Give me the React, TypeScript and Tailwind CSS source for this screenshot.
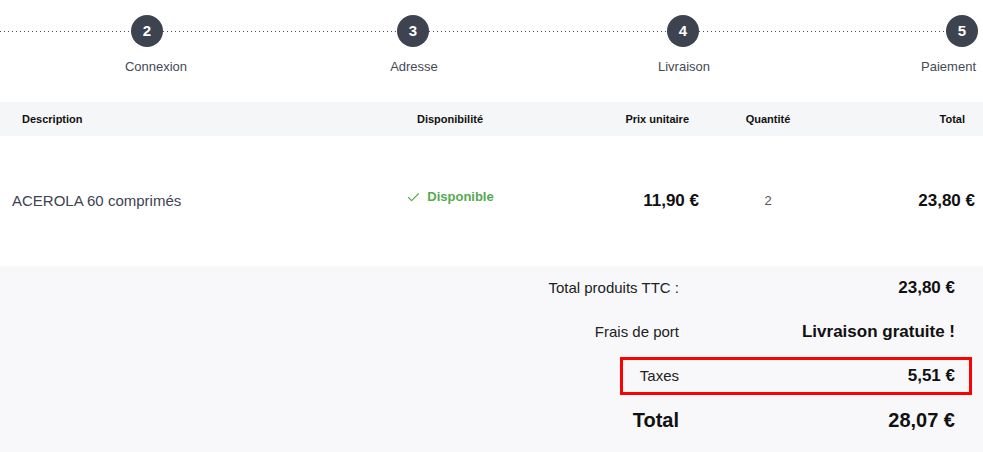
import { Check } from 'lucide-react';

const dots = 'h-px bg-[linear-gradient(to_right,#4b515c_1px,transparent_1px)] bg-[length:4px_1px] bg-repeat-x';

function Step({ n }: { n: number }) {
  return (
    <div className="w-8 h-8 rounded-full bg-[#3d434f] text-white flex items-center justify-center text-[15px] font-bold flex-shrink-0">
      {n}
    </div>
  );
}

function SummaryRow({ label, value, big, boxed }: { label: string; value: string; big?: boolean; boxed?: boolean }) {
  return (
    <div className="h-[44px] flex items-center justify-end pr-[11px]">
      <div className={`w-[352px] h-[38px] flex items-center border-[3px] ${boxed ? 'border-[#ff0000]' : 'border-transparent'}`}>
        <div className={`w-[56px] flex justify-end whitespace-nowrap ${big ? 'text-[20px] font-bold text-[#111]' : 'text-[15px] text-[#222]'}`}>
          {label}
        </div>
        <div className={`flex-1 text-right pr-[14px] font-bold text-[#111] whitespace-nowrap ${big ? 'text-[20px]' : 'text-[17px]'}`}>
          {value}
        </div>
      </div>
    </div>
  );
}

export default function App() {
  return (
    <div className="w-[983px] h-[452px] bg-white overflow-hidden font-['Liberation_Sans',Arial,sans-serif]">
      {/* Stepper */}
      <div className="pt-[15px]">
        <div className="flex items-center h-8">
          <div className={`w-[131px] ${dots}`} />
          <Step n={2} />
          <div className={`w-[234px] ${dots}`} />
          <Step n={3} />
          <div className={`w-[238px] ${dots}`} />
          <Step n={4} />
          <div className={`w-[247px] ${dots}`} />
          <Step n={5} />
        </div>
        <div className="flex mt-[12px] h-4 items-center text-[13px] text-[#444a55]">
          <div className="w-[312px] text-center">Connexion</div>
          <div className="w-[204px] text-center">Adresse</div>
          <div className="w-[336px] text-center">Livraison</div>
          <div className="flex-1 text-right pr-[7px]">Paiement</div>
        </div>
      </div>

      {/* Table */}
      <div className="mt-[27px]">
        <div className="h-[34px] flex items-center bg-[#f5f6f8] text-[11px] font-bold text-[#111]">
          <div className="w-[380px] pl-[22px]">Description</div>
          <div className="w-[140px] text-center">Disponibilité</div>
          <div className="w-[190px] text-right pr-[21px]">Prix unitaire</div>
          <div className="w-[116px] text-center">Quantité</div>
          <div className="flex-1 text-right pr-[18px]">Total</div>
        </div>
        <div className="h-[130px] flex items-center">
          <div className="w-[380px] pl-[12px] text-[15px] text-[#3d4350]">ACEROLA 60 comprimés</div>
          <div className="w-[140px] flex items-center justify-center gap-[6px] mb-[8px] text-[13px] font-bold text-[#55aa4f]">
            <Check className="w-[15px] h-[15px]" strokeWidth={1.75} />
            Disponible
          </div>
          <div className="w-[190px] text-right pr-[11px] text-[17px] font-bold text-[#111]">11,90 €</div>
          <div className="w-[116px] text-center text-[13px] text-[#555]">2</div>
          <div className="flex-1 text-right pr-[8px] text-[17px] font-bold text-[#111]">23,80 €</div>
        </div>
      </div>

      {/* Summary */}
      <div className="bg-[#f8f8fa] pb-[10px]">
        <SummaryRow label="Total produits TTC :" value="23,80 €" />
        <SummaryRow label="Frais de port" value="Livraison gratuite !" />
        <SummaryRow label="Taxes" value="5,51 €" boxed />
        <SummaryRow label="Total" value="28,07 €" big />
      </div>
    </div>
  );
}
